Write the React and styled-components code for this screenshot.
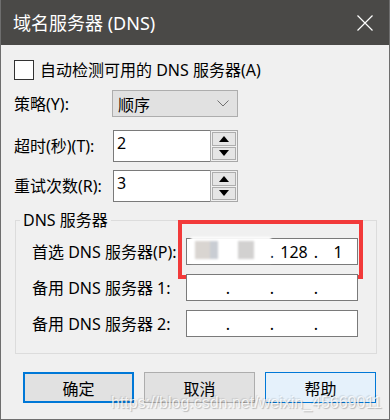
import React from 'react'
import styled, { createGlobalStyle } from 'styled-components'

const GlobalStyle = createGlobalStyle`
  html, body {
    margin: 0;
    padding: 0;
    background: #f0f0f0;
  }
  body {
    font-family: "Noto Sans", "Noto Sans CJK SC", sans-serif;
    color: #000;
  }
`

export default function App() {
  return (
    <>
      <GlobalStyle />
      <Window>
        <TitleBar>
          <Title>域名服务器 (DNS)</Title>
          <CloseIcon width="16" height="16" viewBox="0 0 16 16">
            <path d="M0.5 0.5 L15.5 15.5 M15.5 0.5 L0.5 15.5" stroke="#fff" strokeWidth="1.2" fill="none" />
          </CloseIcon>
        </TitleBar>

        <Body>
          <CheckRow>
            <CheckBox />
            <Label>自动检测可用的 DNS 服务器(A)</Label>
          </CheckRow>

          <FormRow $top={10} $height={27}>
            <Label>策略(Y):</Label>
            <Select>
              <span>顺序</span>
              <svg width="12" height="7" viewBox="0 0 12 7">
                <path d="M0.5 0.5 L6 6 L11.5 0.5" stroke="#707070" fill="none" />
              </svg>
            </Select>
          </FormRow>

          <FormRow $top={13} $height={31}>
            <Label>超时(秒)(T):</Label>
            <SpinBox>
              <SpinInput>2</SpinInput>
              <Spinner>
                <SpinButton>
                  <svg width="10" height="6" viewBox="0 0 10 6"><polygon points="0,6 10,6 5,0" fill="#000" /></svg>
                </SpinButton>
                <SpinButton>
                  <svg width="10" height="6" viewBox="0 0 10 6"><polygon points="0,0 10,0 5,6" fill="#000" /></svg>
                </SpinButton>
              </Spinner>
            </SpinBox>
          </FormRow>

          <FormRow $top={9} $height={31}>
            <Label>重试次数(R):</Label>
            <SpinBox>
              <SpinInput>3</SpinInput>
              <Spinner>
                <SpinButton>
                  <svg width="10" height="6" viewBox="0 0 10 6"><polygon points="0,6 10,6 5,0" fill="#000" /></svg>
                </SpinButton>
                <SpinButton>
                  <svg width="10" height="6" viewBox="0 0 10 6"><polygon points="0,0 10,0 5,6" fill="#000" /></svg>
                </SpinButton>
              </Spinner>
            </SpinBox>
          </FormRow>
        </Body>

        <Group>
          <Legend>DNS 服务器</Legend>
          <ServerRow>
            <Label>首选 DNS 服务器(P):</Label>
            <IpField>
              <Segment />
              <Dot>.</Dot>
              <Segment />
              <Dot>.</Dot>
              <Segment>128</Segment>
              <Dot>.</Dot>
              <Segment>1</Segment>
              <Redaction>
                <Smudge $w={15} $c="#d9d5d1" />
                <Smudge $w={8} $c="#c9cdd3" />
                <Smudge $w={20} $c="#ffffff" />
                <Smudge $w={16} $c="#d2d1d0" />
              </Redaction>
              <Highlight />
            </IpField>
          </ServerRow>
          <ServerRow>
            <Label>备用 DNS 服务器 1:</Label>
            <IpField>
              <Segment />
              <Dot>.</Dot>
              <Segment />
              <Dot>.</Dot>
              <Segment />
              <Dot>.</Dot>
              <Segment />
            </IpField>
          </ServerRow>
          <ServerRow>
            <Label>备用 DNS 服务器 2:</Label>
            <IpField>
              <Segment />
              <Dot>.</Dot>
              <Segment />
              <Dot>.</Dot>
              <Segment />
              <Dot>.</Dot>
              <Segment />
            </IpField>
          </ServerRow>
        </Group>

        <ButtonRow>
          <Button $variant="default">确定</Button>
          <Button>取消</Button>
          <Button $variant="hover">帮助</Button>
        </ButtonRow>

        <Watermark>https://blog.csdn.net/weixin_45669011</Watermark>
      </Window>
    </>
  )
}

const Window = styled.div`
  position: relative;
  width: 390px;
  height: 420px;
  box-sizing: border-box;
  border: 1px solid #6e6e6e;
  border-top: none;
  background: #f0f0f0;
  overflow: hidden;
`

const TitleBar = styled.div`
  height: 45px;
  background: #4a4947;
  display: flex;
  align-items: center;
  justify-content: space-between;
  padding: 0 16px 0 12px;
`

const Title = styled.div`
  color: #fff;
  font-size: 18px;
  line-height: 24px;
`

const CloseIcon = styled.svg`
  display: block;
`

const Body = styled.div`
  padding: 15px 12px 0 13px;
`

const Label = styled.span`
  font-size: 16px;
  line-height: 20px;
  white-space: nowrap;
`

const CheckRow = styled.div`
  display: flex;
  align-items: center;
  gap: 6px;
  height: 20px;
`

const CheckBox = styled.div`
  width: 20px;
  height: 20px;
  box-sizing: border-box;
  border: 1px solid #333;
  background: #fff;
`

const FormRow = styled.div`
  display: grid;
  grid-template-columns: 98px 126px;
  align-items: center;
  margin-top: ${p => p.$top}px;
  height: ${p => p.$height}px;
`

const Select = styled.div`
  height: 27px;
  box-sizing: border-box;
  border: 1px solid #adadad;
  background: #e1e1e1;
  display: flex;
  align-items: center;
  justify-content: space-between;
  padding: 0 8px 0 5px;
  font-size: 16px;
`

const SpinBox = styled.div`
  display: flex;
  height: 32px;
  margin-left: 1px;
`

const SpinInput = styled.div`
  flex: 1;
  box-sizing: border-box;
  border: 1px solid #7a7a7a;
  border-right: none;
  background: #fff;
  font-size: 16px;
  line-height: 20px;
  padding: 2px 3px;
`

const Spinner = styled.div`
  width: 28px;
  box-sizing: border-box;
  border: 1px solid #a8a8a8;
  padding: 1px;
  display: flex;
  flex-direction: column;
  gap: 1px;
  background: #f0f0f0;
`

const SpinButton = styled.div`
  flex: 1;
  box-sizing: border-box;
  border: 1px solid #adadad;
  background: #e5e5e5;
  display: flex;
  align-items: center;
  justify-content: center;
`

const Group = styled.fieldset`
  margin: 11px 12px 0 14px;
  padding: 10px 18px 16px 16px;
  border: 1px solid #dcdcdc;
  display: flex;
  flex-direction: column;
  gap: 9px;
`

const Legend = styled.legend`
  font-size: 16px;
  line-height: 16px;
  padding: 0 3px;
  margin-left: -12px;
`

const ServerRow = styled.div`
  display: grid;
  grid-template-columns: 154px 172px;
  align-items: center;
  height: 27px;
`

const IpField = styled.div`
  position: relative;
  height: 27px;
  box-sizing: border-box;
  border: 1px solid #7a7a7a;
  background: #fff;
  display: flex;
  align-items: center;
  font-size: 16px;
  line-height: 20px;
`

const Segment = styled.span`
  flex: 1;
  text-align: center;
`

const Dot = styled.span`
  width: 6px;
  text-align: center;
`

const Redaction = styled.div`
  position: absolute;
  left: 4px;
  top: -2px;
  width: 76px;
  height: 26px;
  background: #fff;
  display: flex;
  align-items: center;
  padding-left: 4px;
  filter: blur(1.2px);
`

const Smudge = styled.span`
  width: ${p => p.$w}px;
  height: 18px;
  background: ${p => p.$c};
`

const Highlight = styled.div`
  position: absolute;
  left: -9px;
  top: -19px;
  right: -6px;
  bottom: -15px;
  border: 4px solid #f23a3a;
  pointer-events: none;
`

const ButtonRow = styled.div`
  display: flex;
  gap: 10px;
  padding-left: 22px;
  margin-top: 18px;
`

const Button = styled.div`
  width: 111px;
  height: 31px;
  box-sizing: border-box;
  display: flex;
  align-items: center;
  justify-content: center;
  font-size: 16px;
  border: ${p => p.$variant === 'default' ? '2px solid #0078d7' : p.$variant === 'hover' ? '1px solid #0078d7' : '1px solid #adadad'};
  background: ${p => p.$variant === 'hover' ? '#e5f1fb' : '#e1e1e1'};
`

const Watermark = styled.div`
  position: absolute;
  left: 110px;
  top: 393px;
  font-family: "Liberation Sans", Arial, sans-serif;
  font-size: 16px;
  line-height: 19px;
  color: rgba(255, 255, 255, 0.8);
  text-shadow: 1px 1px 1px rgba(0, 0, 0, 0.22), -1px -1px 1px rgba(0, 0, 0, 0.1);
  white-space: nowrap;
  pointer-events: none;
`
